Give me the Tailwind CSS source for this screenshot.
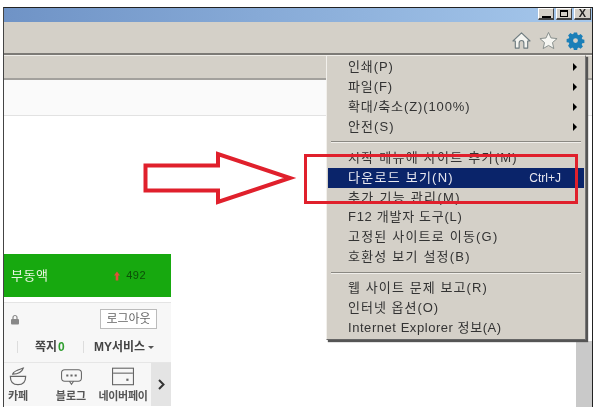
<!DOCTYPE html>
<html lang="ko">
<head>
  <meta charset="utf-8"/>
  <title>Internet Explorer</title>
  <script src="https://cdn.jsdelivr.net/npm/@tailwindcss/browser@4"></script>
</head>
<body class="w-[600px] h-[407px] overflow-hidden bg-white font-['Liberation_Sans','Noto_Sans_CJK_KR',sans-serif]">
  <div class="relative w-[600px] h-[407px] pt-[7px] pl-[3px] pr-[7px] blur-[0.35px]">
    <!-- Window -->
    <div class="relative h-[400px] border-t border-l border-r border-t-[#222] border-l-[#444] border-r-[#222] flex flex-col overflow-hidden">
      <!-- Title bar -->
      <div class="h-[14px] shrink-0 bg-gradient-to-r from-[#6f93c6] to-[#a6c8ec] flex justify-end gap-[2px] pr-[1px]">
        <div class="w-[16px] h-[12px] bg-[#d4d0c8] border border-[#444] border-b-2 border-t-white border-l-white flex items-end justify-center"><div class="w-[9px] h-[2px] bg-black"></div></div>
        <div class="w-[16px] h-[12px] bg-[#d4d0c8] border border-[#444] border-b-2 border-t-white border-l-white flex items-center justify-center"><div class="w-[8px] h-[7px] border border-black border-t-2"></div></div>
        <div class="w-[17px] h-[12px] bg-[#d4d0c8] border border-[#444] border-b-2 border-t-white border-l-white flex items-center justify-center text-[11px] leading-none font-bold text-[#222]">X</div>
      </div>
      <!-- Toolbar -->
      <div class="h-[33px] shrink-0 bg-[#d4d0c8] border-b-2 border-b-[#7c7a76] flex items-center justify-end gap-[8px] pr-[7px] pt-[5px]">
        <svg class="w-[19px] h-[19px]" viewBox="0 0 20 20" fill="#f4f4f0" stroke="#6f7c80" stroke-width="1.2" stroke-linejoin="round"><path d="M10 2 L19 10.500 L16.500 10.500 L16.500 18 L12.500 18 L12.500 12.500 A2.500 2.500 0 0 0 7.500 12.500 L7.500 18 L3.500 18 L3.500 10.500 L1 10.500 Z"/></svg>
        <svg class="w-[19px] h-[19px]" viewBox="0 0 20 20" fill="#f6f6f2" stroke="#858c8a" stroke-width="1" stroke-linejoin="round"><path d="M10 1.500 L12.600 7.300 L19 8 L14.200 12.200 L15.600 18.500 L10 15.200 L4.400 18.500 L5.800 12.200 L1 8 L7.400 7.300 Z"/></svg>
        <svg class="w-[19px] h-[19px]" viewBox="0 0 20 20"><path fill="#1b7fb8" fill-rule="evenodd" d="M8 1h4l.5 2.600 1.600.7L16.300 2.800l2.900 2.900-1.500 2.200.7 1.600 2.600.5v4l-2.600.5-.7 1.600 1.500 2.200-2.900 2.900-2.200-1.500-1.600.7-.5 2.600H8l-.5-2.600-1.600-.7-2.200 1.500L.8 17.300l1.500-2.200-.7-1.600L-1 13V9l2.600-.5.7-1.600L.8 4.700 3.700 1.800l2.200 1.500 1.600-.7zM10 8a3 3 0 1 0 0 6 3 3 0 0 0 0-6z" transform="translate(1.500 .7) scale(.85)"/></svg>
      </div>
      <!-- Tab bar -->
      <div class="h-[25px] shrink-0 bg-[#d4d0c8] border-t border-t-[#f0eeea] border-b-2 border-b-[#a3a19d]"></div>
      <!-- Page -->
      <div class="flex-1 bg-white flex flex-col">
        <div class="h-[36px] shrink-0 bg-[#fafafa] border-b border-b-[#e2e2e2]"></div>
        <!-- Naver widget, bottom left -->
        <div class="mt-[138px] w-[167px]">
          <div class="h-[43px] bg-[#17a90f] flex items-center justify-between pl-[7px] pr-[25px] text-[13px] tracking-[0.5px] text-[#e8f5e0]">
            <span>부동액</span>
            <span class="flex items-center gap-[6px] text-[#0c4f08]">
              <svg class="w-[6px] h-[10px]" viewBox="0 0 6 9"><path fill="#e0503a" d="M3 0 L6 4 L4.300 4 L4.300 9 L1.700 9 L1.700 4 L0 4 Z"/></svg>
              <span class="text-[11px]">492</span>
            </span>
          </div>
          <div class="mt-[5px] bg-[#f7f7f7] h-[104px] border-t border-[#e4e4e4]">
            <div class="h-[32px] flex items-center justify-between pl-[7px] pr-[14px]">
              <svg class="w-[8px] h-[11px]" viewBox="0 0 8 10"><path fill="none" stroke="#888" stroke-width="1.200" d="M2 4.500V3a2 2 0 0 1 4 0v1.500"/><rect y="4.500" width="8" height="5.500" rx="1" fill="#888"/></svg>
              <span class="w-[57px] h-[20px] border border-[#bbb] bg-white text-[12px] text-[#666] flex items-center justify-center">로그아웃</span>
            </div>
            <div class="h-[28px] flex items-center pb-[3px] pl-[13px] text-[12px] font-bold text-[#444] border-b border-[#e6e6e6]">
              <span class="w-px h-[12px] bg-[#ddd]"></span>
              <span class="ml-[17px] w-[36px]">쪽지<span class="text-[#2f9e2f] ml-[1px]">0</span></span>
              <span class="w-px h-[12px] bg-[#ddd] ml-[12px]"></span>
              <span class="ml-[10px] flex items-center gap-[3px] whitespace-nowrap">MY서비스<span class="w-0 h-0 border-x-[3px] border-x-transparent border-t-[3px] border-t-[#555]"></span></span>
            </div>
            <div class="h-[43px] flex text-[11px] font-bold text-[#555]">
              <div class="flex-1 flex items-start pt-[4px]">
                <div class="w-[28px] flex flex-col items-center gap-[1px]">
                  <svg class="w-[20px] h-[20px]" viewBox="0 0 17 17" fill="none" stroke="#666"><path d="M2 8h13c0 5-3 7-6.500 7S2 13 2 8z"/><path d="M4 6c1-3 6-4 9-5-1 3-3 5-9 5z"/></svg>
                  <span>카페</span>
                </div>
                <div class="ml-[14px] w-[50px] flex flex-col items-center gap-[1px]">
                  <svg class="w-[23px] h-[20px]" viewBox="0 0 22 17" fill="none" stroke="#666"><rect x="1.500" y="1.500" width="19" height="11" rx="3"/><path d="M9 12.500l2 3 2-3"/><path d="M6 7h2M10 7h2M14 7h2" stroke-width="2"/></svg>
                  <span>블로그</span>
                </div>
                <div class="w-[54px] flex flex-col items-center gap-[1px] whitespace-nowrap">
                  <svg class="w-[22px] h-[20px]" viewBox="0 0 20 17" fill="none" stroke="#666"><rect x=".5" y=".5" width="19" height="15"/><path d="M1 5h18"/><path d="M13 11h2" stroke-width="2"/></svg>
                  <span class="tracking-[-0.3px]">네이버페이</span>
                </div>
              </div>
              <div class="w-[20px] bg-[#e4e4e4] flex items-center justify-center">
                <svg class="w-[7px] h-[11px]" viewBox="0 0 7 11" fill="none" stroke="#333" stroke-width="2"><path d="M1 1l4.500 4.500L1 10"/></svg>
              </div>
            </div>
          </div>
        </div>
      </div>
      <!-- Scrollbar strip on the right, under the menu -->
      <div class="absolute right-0 top-[333px] bottom-0 w-[16px] bg-[#c9c9c9]"></div>
    </div>

    <!-- Tools menu -->
    <div class="absolute left-[326px] top-[55px] w-[260px] h-[285px] bg-[#d4d0c8] border border-t-[#f2f0ec] border-l-[#f2f0ec] border-r-[#777] border-b-[#666] shadow-[2px_2px_1px_#555] pt-[1px] px-[1px] text-[13px] tracking-[0.55px] text-[#333] leading-[20px]">
      <div class="h-[20px] pl-[20px] pr-[7px] flex justify-between items-center tracking-[0.9px]">인쇄(P)<span class="w-0 h-0 border-y-[4px] border-y-transparent border-l-[4px] border-l-black"></span></div>
      <div class="h-[20px] pl-[20px] pr-[7px] flex justify-between items-center tracking-[0.9px]">파일(F)<span class="w-0 h-0 border-y-[4px] border-y-transparent border-l-[4px] border-l-black"></span></div>
      <div class="h-[20px] pl-[20px] pr-[7px] flex justify-between items-center tracking-[0.9px]">확대/축소(Z)(100%)<span class="w-0 h-0 border-y-[4px] border-y-transparent border-l-[4px] border-l-black"></span></div>
      <div class="h-[20px] pl-[20px] pr-[7px] flex justify-between items-center tracking-[1.1px]">안전(S)<span class="w-0 h-0 border-y-[4px] border-y-transparent border-l-[4px] border-l-black"></span></div>
      <div class="h-[2px] mx-[3px] my-[4px] bg-[#8a8882] border-b border-b-[#f0eeea]"></div>
      <div class="h-[20px] pl-[20px] mt-[5px] tracking-[1.25px]">시작 메뉴에 사이트 추가(M)</div>
      <div class="h-[20px] pl-[20px] pr-[23px] flex justify-between bg-[#0a246a] text-[#e8e8f0]"><span class="tracking-[1.25px]">다운로드 보기(N)</span><span class="tracking-normal text-[12px]">Ctrl+J</span></div>
      <div class="h-[19px] pl-[20px] tracking-[1.3px]">추가 기능 관리(M)</div>
      <div class="h-[20px] pl-[20px] tracking-[0.7px]">F12 개발자 도구(L)</div>
      <div class="h-[20px] pl-[20px] tracking-[1.2px]">고정된 사이트로 이동(G)</div>
      <div class="h-[20px] pl-[20px] tracking-[1.2px]">호환성 보기 설정(B)</div>
      <div class="h-[2px] mx-[3px] mt-[5px] mb-[4px] bg-[#8a8882] border-b border-b-[#f0eeea]"></div>
      <div class="h-[20px] pl-[20px] mt-[4px] tracking-[1.1px]">웹 사이트 문제 보고(R)</div>
      <div class="h-[20px] pl-[20px] tracking-[1px]">인터넷 옵션(O)</div>
      <div class="h-[20px] pl-[20px]">Internet Explorer 정보(A)</div>
    </div>

    <!-- Red callout box and arrow -->
    <div class="absolute left-[304px] top-[154px] w-[274px] h-[50px] border-[3px] border-[#e0202c]"></div>
    <svg class="absolute left-[140px] top-[148px] w-[160px] h-[60px]" viewBox="0 0 160 60" fill="white" stroke="#e0202c" stroke-width="4"><path d="M5.500 17.500H78V6L150 30 78 54V42.500H5.500Z"/></svg>
  </div>
</body>
</html>
